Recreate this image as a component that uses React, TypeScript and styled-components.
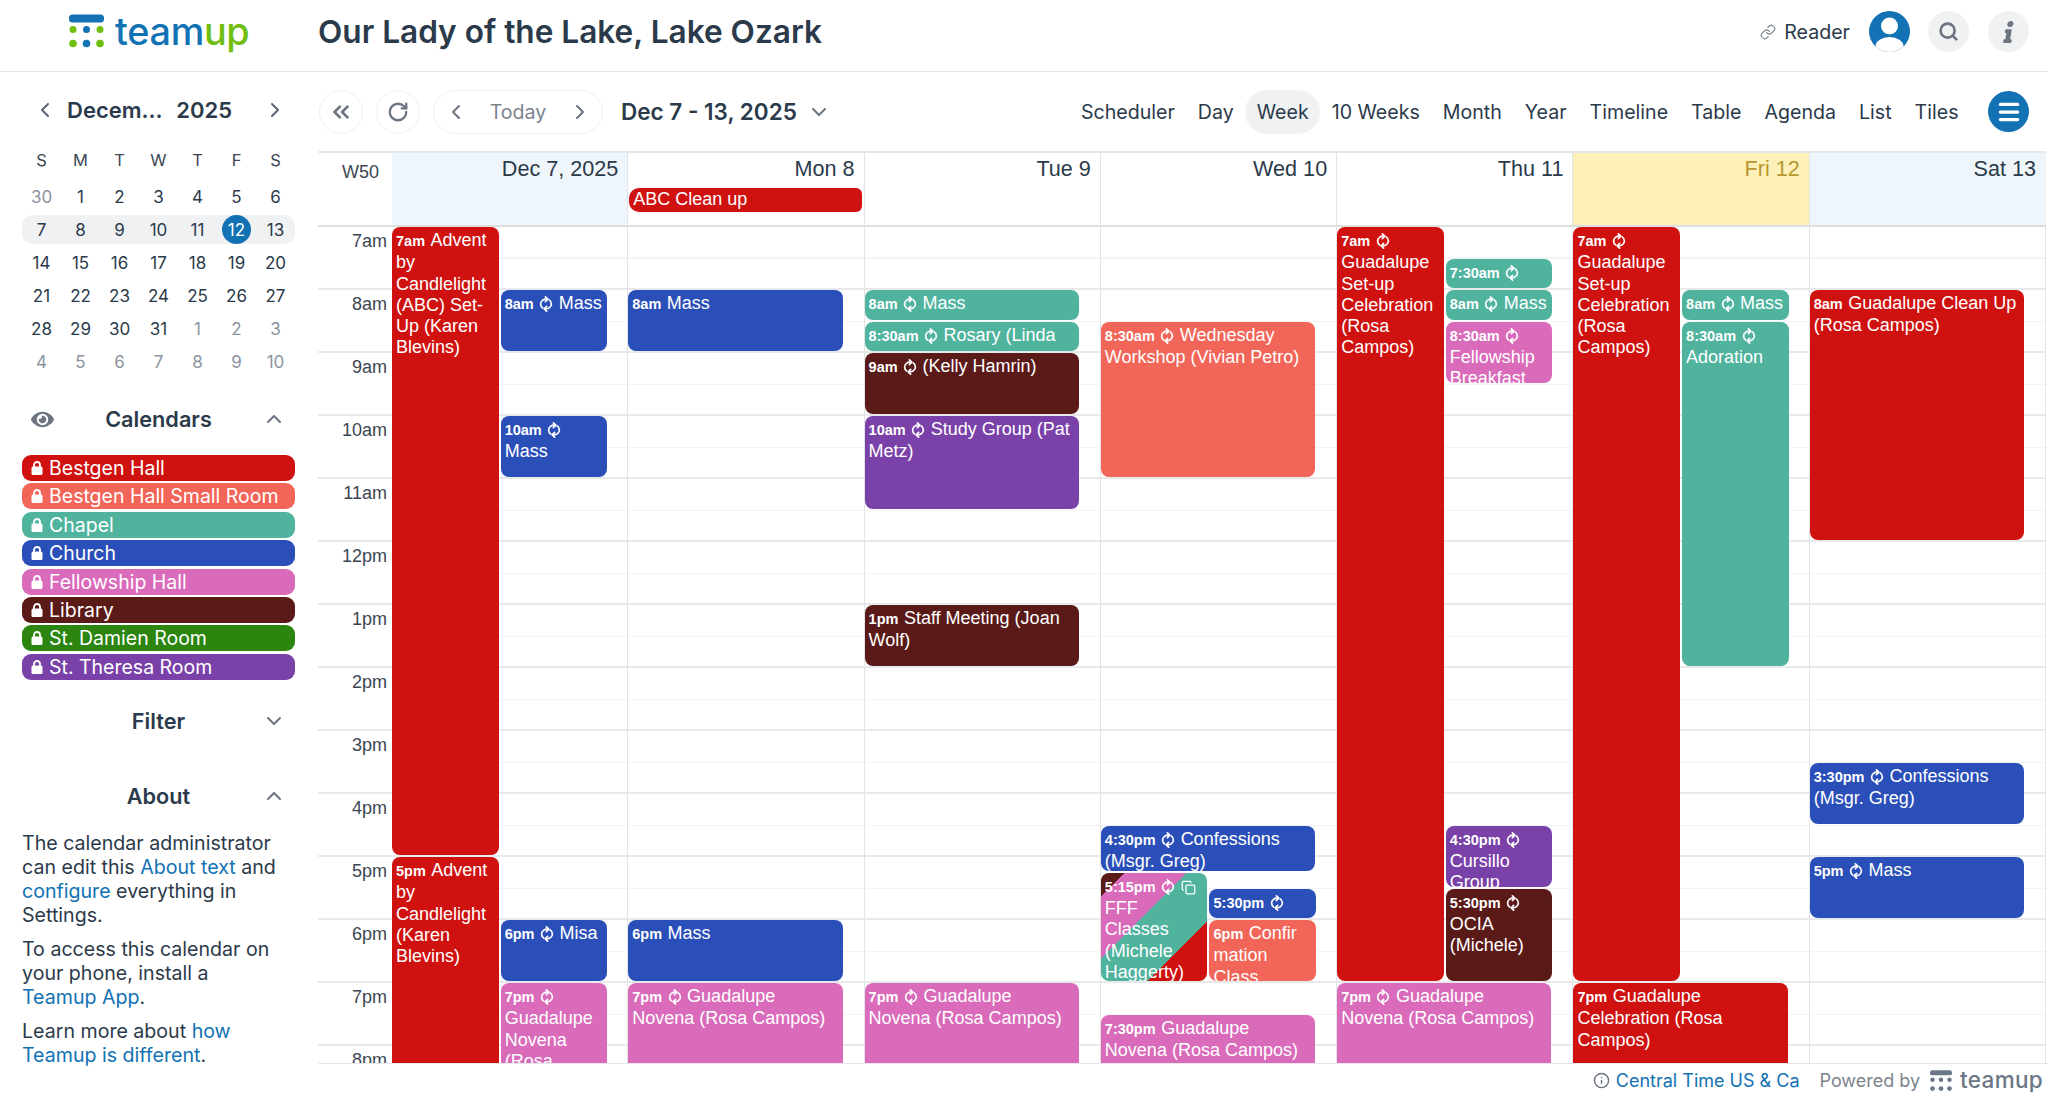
import React, { FC } from "react";
import styled, { createGlobalStyle } from "styled-components";
import { ChevronDown, ChevronLeft, ChevronRight, ChevronUp, ChevronsLeft, Copy, Info, Link, Menu, RotateCw, Search } from "lucide-react";
import { FaEye, FaInfo } from "react-icons/fa";

const HOUR = 63;
const FIRST_HOUR = 7;

const RED = "#cf1210";
const SALMON = "#f2665a";
const TEAL = "#4fb39e";
const BLUE = "#2b4fb8";
const PINK = "#d96bba";
const BROWN = "#5a1a18";
const GREEN = "#2b850e";
const PURPLE = "#7a42a8";
const FFF_BG = `linear-gradient(135deg, ${BROWN} 0 11%, ${PINK} 11% 40%, ${TEAL} 40% 72%, ${RED} 72%)`;

const GlobalStyle = createGlobalStyle`
  html, body { margin: 0; padding: 0; background: #fff; }
  body { font-family: Inter, "Liberation Sans", sans-serif; color: #2b3a4a; }
  * { box-sizing: border-box; }
`;

const Page = styled.div`
  width: 2048px;
  height: 1097px;
  overflow: hidden;
  display: flex;
  flex-direction: column;
`;

const Header = styled.header`
  height: 72px;
  flex: none;
  display: flex;
  align-items: center;
  padding: 0 19px 8px 69px;
  border-bottom: 1px solid #e5e7eb;
`;

const LogoWrap = styled.div`
  width: 249px;
  display: flex;
  align-items: center;
  gap: 11px;
`;

const LogoWord = styled.span<{ $small?: boolean }>`
  font-size: ${(p) => (p.$small ? "22.5px" : "37.8px")};
  font-weight: 500;
  letter-spacing: ${(p) => (p.$small ? "0.3px" : "-0.3px")};
  line-height: 1;
  color: ${(p) => (p.$small ? "#6b7785" : "#1272b4")};
  b { font-weight: 500; color: ${(p) => (p.$small ? "#6b7785" : "#6fbe10")}; }
`;

const Title = styled.h1`
  margin: 0;
  font-size: 31.6px;
  font-weight: 600;
  color: #2b3a4a;
`;

const HeaderRight = styled.div`
  margin-left: auto;
  display: flex;
  align-items: center;
  font-size: 19.6px;
  color: #2b3a4a;
  svg.link { color: #8a929c; margin-right: 8px; }
`;

const RoundIcon = styled.div<{ $blue?: boolean }>`
  width: 41px;
  height: 41px;
  border-radius: 50%;
  display: flex;
  align-items: center;
  justify-content: center;
  overflow: hidden;
  color: ${(p) => (p.$blue ? "#fff" : "#6b7480")};
  background: ${(p) => (p.$blue ? "#1272b4" : "#f0f1f3")};
`;

const UserIcon = styled(RoundIcon)`
  margin: 0 18px 0 19px;
`;

const SearchIcon = styled(RoundIcon)`
  margin-right: 19px;
`;

const InfoGlyph = styled(FaInfo)`
  transform: skewX(-10deg);
`;

const Body = styled.div`
  flex: 1;
  display: flex;
  min-height: 0;
`;

const Sidebar = styled.aside`
  width: 318px;
  flex: none;
  padding: 19px 23px 0 22px;
  overflow: hidden;
`;

const MiniHead = styled.div`
  height: 38px;
  display: flex;
  align-items: center;
  padding: 0 8px 0 11px;
  font-size: 22px;
  font-weight: 600;
  svg { color: #5b6672; }
`;

const MiniTitle = styled.div`
  flex: 1;
  display: flex;
  justify-content: space-between;
  padding: 0 31px 0 10px;
`;

const MiniGrid = styled.div`
  margin-top: 13px;
  display: grid;
  grid-template-columns: repeat(7, 39px);
`;

const WeekDay = styled.div`
  height: 38px;
  display: flex;
  align-items: flex-start;
  justify-content: center;
  padding-top: 8px;
  font-size: 16.5px;
  color: #3b4653;
`;

const DayCell = styled.div<{ $muted?: boolean; $week?: boolean; $first?: boolean; $last?: boolean }>`
  height: 29px;
  margin: 2px 0;
  display: flex;
  align-items: center;
  justify-content: center;
  font-size: 17px;
  color: ${(p) => (p.$muted ? "#8b949e" : "#2b3a4a")};
  background: ${(p) => (p.$week ? "#eff1f3" : "transparent")};
  border-radius: ${(p) => (p.$first ? "10px 0 0 10px" : p.$last ? "0 10px 10px 0" : "0")};
`;

const TodayDot = styled.span`
  width: 29px;
  height: 29px;
  border-radius: 50%;
  background: #1272b4;
  color: #fff;
  display: flex;
  align-items: center;
  justify-content: center;
`;

const SectionHead = styled.div<{ $gap: number }>`
  height: 40px;
  margin-top: ${(p) => p.$gap}px;
  display: grid;
  grid-template-columns: 40px 1fr 40px;
  align-items: center;
  text-align: center;
  font-size: 21.7px;
  font-weight: 600;
  color: #2b3a4a;
  svg { color: #6b7480; }
`;

const EyeSlot = styled.div`
  padding-left: 9px;
  display: flex;
  color: #6b7480;
`;

const ChevronSlot = styled.div`
  display: flex;
  justify-content: flex-end;
  padding-right: 9px;
`;

const CalendarList = styled.div`
  margin-top: 16px;
  display: flex;
  flex-direction: column;
  gap: 2.4px;
`;

const CalendarPill = styled.div<{ $color: string }>`
  height: 26px;
  border-radius: 9px;
  background: ${(p) => p.$color};
  color: #fff;
  display: flex;
  align-items: center;
  gap: 6px;
  padding-left: 9px;
  font-size: 19.5px;
  white-space: nowrap;
`;

const AboutText = styled.div`
  margin-top: 15px;
  padding-right: 10px;
  font-size: 19.6px;
  line-height: 24px;
  color: #2b3a4a;
  p { margin: 0 0 10px; }
  a { color: #1272b4; text-decoration: none; }
`;

const Main = styled.main`
  flex: 1;
  min-width: 0;
  display: flex;
  flex-direction: column;
`;

const Toolbar = styled.div`
  height: 79px;
  flex: none;
  display: flex;
  align-items: center;
  padding: 0 19px 0 1px;
`;

const CircleButton = styled.div`
  width: 44px;
  height: 44px;
  margin-right: 13px;
  border: 1.5px solid #eef0f2;
  border-radius: 50%;
  display: flex;
  align-items: center;
  justify-content: center;
  color: #6b7480;
`;

const TodayPill = styled.div`
  width: 170px;
  height: 44px;
  border: 1.5px solid #eef0f2;
  border-radius: 22px;
  display: flex;
  align-items: center;
  justify-content: space-between;
  padding: 0 10px;
  font-size: 19.6px;
  color: #7b838d;
  svg { color: #6b7480; }
`;

const DateRange = styled.div`
  margin-left: 18px;
  display: flex;
  align-items: center;
  gap: 10px;
  font-size: 22.5px;
  font-weight: 600;
  color: #2b3a4a;
  svg { color: #6b7480; }
`;

const Tabs = styled.div`
  margin-left: auto;
  display: flex;
  align-items: center;
`;

const Tab = styled.div<{ $active?: boolean }>`
  height: 44px;
  padding: 0 11.5px;
  display: flex;
  align-items: center;
  font-size: 19.6px;
  color: #2b3a4a;
  border-radius: 22px;
  background: ${(p) => (p.$active ? "#eff1f3" : "transparent")};
`;

const MenuButton = styled(RoundIcon)`
  margin-left: 18px;
`;

const Calendar = styled.div`
  flex: 1;
  min-height: 0;
  margin-right: 2px;
  display: flex;
  flex-direction: column;
  overflow: hidden;
  border-top: 2px solid #e5e7eb;
  font-family: "Liberation Sans", Arial, sans-serif;
`;

const DayGrid = styled.div`
  display: grid;
  grid-template-columns: 74px repeat(7, 1fr);
`;

const HeadRow = styled(DayGrid)`
  height: 74px;
  flex: none;
  border-bottom: 2px solid #dedfe1;
`;

const WeekNumber = styled.div`
  padding: 9px 0 0 24px;
  font-size: 18px;
  color: #3b4653;
`;

const HeadCell = styled.div<{ $kind?: "weekend" | "today" }>`
  position: relative;
  padding: 3px 9px 0 2px;
  text-align: right;
  font-size: 21.6px;
  color: ${(p) => (p.$kind === "today" ? "#b8982e" : "#2b3a4a")};
  background: ${(p) => (p.$kind === "weekend" ? "#eff6fb" : p.$kind === "today" ? "#fdf1b9" : "#fff")};
  border-right: 1.5px solid #e3e4e6;
  &:last-child { border-right: 1.5px solid #eff6fb; }
`;

const AllDayEvent = styled.div<{ $color: string }>`
  height: 24px;
  margin: 6px -7px 0 -1px;
  padding-left: 4px;
  border-radius: 10px 6px 6px 10px;
  background: ${(p) => p.$color};
  color: #fff;
  font-size: 18px;
  line-height: 23px;
  text-align: left;
`;

const TimeBody = styled(DayGrid)`
  flex: 1;
  min-height: 0;
  overflow: hidden;
`;

const Gutter = styled.div`
  background: repeating-linear-gradient(to bottom, #fff 0 ${HOUR - 2}px, #e8e9eb ${HOUR - 2}px ${HOUR}px);
`;

const HourLabel = styled.div`
  height: ${HOUR}px;
  padding: 2px 5px 0 0;
  text-align: right;
  font-size: 18px;
  line-height: 24px;
  color: #3b4653;
`;

const DayColumn = styled.div`
  position: relative;
  border-right: 1.5px solid #e3e4e6;
  background: repeating-linear-gradient(
    to bottom,
    #fff 0 ${HOUR / 2 - 1}px,
    #f3f4f5 ${HOUR / 2 - 1}px ${HOUR / 2}px,
    #fff ${HOUR / 2}px ${HOUR - 2}px,
    #e8e9eb ${HOUR - 2}px ${HOUR}px
  );
`;

const EventBox = styled.div<{ $bg: string; $short: boolean }>`
  position: absolute;
  overflow: hidden;
  padding: 3px 3px 0 4px;
  border-radius: 8px;
  background: ${(p) => p.$bg};
  color: #fff;
  font-size: 18px;
  line-height: 21.3px;
  white-space: ${(p) => (p.$short ? "nowrap" : "normal")};
  b { font-size: 14.5px; font-weight: 700; margin-right: 5.5px; }
  svg { vertical-align: -3px; margin-right: 5.5px; }
`;

const Footer = styled.footer`
  height: 34px;
  flex: none;
  border-top: 1px solid #e5e7eb;
  display: flex;
  align-items: center;
  justify-content: flex-end;
  padding: 0 5px 0 0;
  font-size: 18px;
  color: #7b838d;
`;

const ZoneLink = styled.span`
  display: flex;
  align-items: center;
  gap: 6px;
  margin-right: 20px;
  color: #1272b4;
  svg { color: #6b7480; }
`;

const PoweredLogo = styled.span`
  display: flex;
  align-items: center;
  gap: 8px;
  margin-left: 10px;
`;

const RepeatIcon: FC = () => (
  <svg width="14" height="16" viewBox="0 0 14 16" fill="none" stroke="currentColor" strokeWidth="1.7" strokeLinecap="round" strokeLinejoin="round">
    <path d="M8 3.2C4.5 2.8 1.6 5 1.6 8c0 1.8.9 3.2 2.2 4.1" />
    <path d="M6.4.9 8.8 3.2 6.4 5.6" />
    <path d="M6 12.8c3.5.4 6.4-1.8 6.4-4.8 0-1.8-.9-3.2-2.2-4.1" />
    <path d="M7.6 15.1 5.2 12.8 7.6 10.4" />
  </svg>
);

const LockIcon: FC = () => (
  <svg width="12" height="14" viewBox="0 0 12 14" fill="#fff">
    <path d="M3 6V4a3 3 0 0 1 6 0v2" fill="none" stroke="#fff" strokeWidth="1.8" />
    <rect x="0.5" y="5.5" width="11" height="8.5" rx="1.5" />
  </svg>
);

const LogoMark: FC<{ $mono?: boolean; size: number }> = ({ $mono, size }) => {
  const blue = $mono ? "#6b7785" : "#1272b4";
  const green = $mono ? "#6b7785" : "#6fbe10";
  return (
    <svg width={size} height={size} viewBox="0 0 35 34">
      <rect x="0" y="0" width="35" height="8" rx="3.5" fill={blue} />
      <circle cx="4" cy="15" r="3.5" fill={green} />
      <circle cx="17.5" cy="15" r="3.5" fill={blue} />
      <circle cx="31" cy="15" r="3.5" fill={green} />
      <circle cx="4" cy="29" r="3.8" fill={green} />
      <circle cx="17.5" cy="29" r="3.8" fill={blue} />
      <circle cx="31" cy="29" r="3.8" fill={green} />
    </svg>
  );
};

const UserGlyph: FC = () => (
  <svg width="41" height="41" viewBox="0 0 41 41" fill="#fff">
    <circle cx="20.5" cy="15" r="8.5" />
    <ellipse cx="20.5" cy="35" rx="14" ry="9" />
  </svg>
);

type Lane = "full" | "left" | "right" | "wide";

interface CalEvent {
  start: number;
  end: number;
  time: string;
  title?: string;
  color: string;
  lane: Lane;
  repeat?: boolean;
  multi?: boolean;
}

const laneBox = (lane: Lane) => {
  // columns keep a 20px free strip on the right, side by side events share the rest
  if (lane === "left") return { left: "0px", width: "calc((100% - 22px) / 2)" };
  if (lane === "right") return { left: "calc((100% - 22px) / 2 + 2px)", width: "calc((100% - 22px) / 2)" };
  return { left: "0px", width: "calc(100% - 21px)" };
};

const week: CalEvent[][] = [
  [
    { start: 7, end: 17, time: "7am", title: "Advent by Candlelight (ABC) Set-Up (Karen Blevins)", color: RED, lane: "left" },
    { start: 17, end: 24, time: "5pm", title: "Advent by Candlelight (Karen Blevins)", color: RED, lane: "left" },
    { start: 8, end: 9, time: "8am", title: "Mass", color: BLUE, lane: "right", repeat: true },
    { start: 10, end: 11, time: "10am", title: "Mass", color: BLUE, lane: "right", repeat: true },
    { start: 18, end: 19, time: "6pm", title: "Misa", color: BLUE, lane: "right", repeat: true },
    { start: 19, end: 21, time: "7pm", title: "Guadalupe Novena (Rosa Campos)", color: PINK, lane: "right", repeat: true },
  ],
  [
    { start: 8, end: 9, time: "8am", title: "Mass", color: BLUE, lane: "full" },
    { start: 18, end: 19, time: "6pm", title: "Mass", color: BLUE, lane: "full" },
    { start: 19, end: 21, time: "7pm", title: "Guadalupe Novena (Rosa Campos)", color: PINK, lane: "full", repeat: true },
  ],
  [
    { start: 8, end: 8.5, time: "8am", title: "Mass", color: TEAL, lane: "full", repeat: true },
    { start: 8.5, end: 9, time: "8:30am", title: "Rosary (Linda", color: TEAL, lane: "full", repeat: true },
    { start: 9, end: 10, time: "9am", title: "(Kelly Hamrin)", color: BROWN, lane: "full", repeat: true },
    { start: 10, end: 11.5, time: "10am", title: "Study Group (Pat Metz)", color: PURPLE, lane: "full", repeat: true },
    { start: 13, end: 14, time: "1pm", title: "Staff Meeting (Joan Wolf)", color: BROWN, lane: "full" },
    { start: 19, end: 21, time: "7pm", title: "Guadalupe Novena (Rosa Campos)", color: PINK, lane: "full", repeat: true },
  ],
  [
    { start: 8.5, end: 11, time: "8:30am", title: "Wednesday Workshop (Vivian Petro)", color: SALMON, lane: "full", repeat: true },
    { start: 16.5, end: 17.25, time: "4:30pm", title: "Confessions (Msgr. Greg)", color: BLUE, lane: "full", repeat: true },
    { start: 17.25, end: 19, time: "5:15pm", title: "FFF Classes (Michele Haggerty)", color: FFF_BG, lane: "left", repeat: true, multi: true },
    { start: 17.5, end: 18, time: "5:30pm", color: BLUE, lane: "right", repeat: true },
    { start: 18, end: 19, time: "6pm", title: "Confir\u200bmation Class", color: SALMON, lane: "right" },
    { start: 19.5, end: 21, time: "7:30pm", title: "Guadalupe Novena (Rosa Campos)", color: PINK, lane: "full" },
  ],
  [
    { start: 7, end: 19, time: "7am", title: "Guadalupe Set-up Celebration (Rosa Campos)", color: RED, lane: "left", repeat: true },
    { start: 7.5, end: 8, time: "7:30am", color: TEAL, lane: "right", repeat: true },
    { start: 8, end: 8.5, time: "8am", title: "Mass", color: TEAL, lane: "right", repeat: true },
    { start: 8.5, end: 9.5, time: "8:30am", title: "Fellowship Breakfast", color: PINK, lane: "right", repeat: true },
    { start: 16.5, end: 17.5, time: "4:30pm", title: "Cursillo Group", color: PURPLE, lane: "right", repeat: true },
    { start: 17.5, end: 19, time: "5:30pm", title: "OCIA (Michele)", color: BROWN, lane: "right", repeat: true },
    { start: 19, end: 21, time: "7pm", title: "Guadalupe Novena (Rosa Campos)", color: PINK, lane: "wide", repeat: true },
  ],
  [
    { start: 7, end: 19, time: "7am", title: "Guadalupe Set-up Celebration (Rosa Campos)", color: RED, lane: "left", repeat: true },
    { start: 8, end: 8.5, time: "8am", title: "Mass", color: TEAL, lane: "right", repeat: true },
    { start: 8.5, end: 14, time: "8:30am", title: "Adoration", color: TEAL, lane: "right", repeat: true },
    { start: 19, end: 21, time: "7pm", title: "Guadalupe Celebration (Rosa Campos)", color: RED, lane: "wide" },
  ],
  [
    { start: 8, end: 12, time: "8am", title: "Guadalupe Clean Up (Rosa Campos)", color: RED, lane: "full" },
    { start: 15.5, end: 16.5, time: "3:30pm", title: "Confessions (Msgr. Greg)", color: BLUE, lane: "full", repeat: true },
    { start: 17, end: 18, time: "5pm", title: "Mass", color: BLUE, lane: "full", repeat: true },
  ],
];

const hourLabels = ["7am", "8am", "9am", "10am", "11am", "12pm", "1pm", "2pm", "3pm", "4pm", "5pm", "6pm", "7pm", "8pm"];

const dayHeads: { label: string; kind?: "weekend" | "today" }[] = [
  { label: "Dec 7, 2025", kind: "weekend" },
  { label: "Mon 8" },
  { label: "Tue 9" },
  { label: "Wed 10" },
  { label: "Thu 11" },
  { label: "Fri 12", kind: "today" },
  { label: "Sat 13", kind: "weekend" },
];

const calendars = [
  { name: "Bestgen Hall", color: RED },
  { name: "Bestgen Hall Small Room", color: SALMON },
  { name: "Chapel", color: TEAL },
  { name: "Church", color: BLUE },
  { name: "Fellowship Hall", color: PINK },
  { name: "Library", color: BROWN },
  { name: "St. Damien Room", color: GREEN },
  { name: "St. Theresa Room", color: PURPLE },
];

const miniDays = [
  30, 1, 2, 3, 4, 5, 6,
  7, 8, 9, 10, 11, 12, 13,
  14, 15, 16, 17, 18, 19, 20,
  21, 22, 23, 24, 25, 26, 27,
  28, 29, 30, 31, 1, 2, 3,
  4, 5, 6, 7, 8, 9, 10,
];

const viewTabs = ["Scheduler", "Day", "Week", "10 Weeks", "Month", "Year", "Timeline", "Table", "Agenda", "List", "Tiles"];

const EventItem: FC<{ event: CalEvent }> = ({ event }) => {
  const top = (event.start - FIRST_HOUR) * HOUR;
  const height = (event.end - event.start) * HOUR - 2;
  return (
    <EventBox $bg={event.color} $short={event.end - event.start <= 0.5} style={{ top, height, ...laneBox(event.lane) }}>
      <b>{event.time}</b>
      {event.repeat && <RepeatIcon />}
      {event.multi && <Copy size={15} />}
      {event.title}
    </EventBox>
  );
};

const App: FC = () => {
  return (
    <Page>
      <GlobalStyle />
      <Header>
        <LogoWrap>
          <LogoMark size={35} />
          <LogoWord>team<b>up</b></LogoWord>
        </LogoWrap>
        <Title>Our Lady of the Lake, Lake Ozark</Title>
        <HeaderRight>
          <Link className="link" size={16} />
          Reader
          <UserIcon $blue><UserGlyph /></UserIcon>
          <SearchIcon><Search size={21} strokeWidth={3} /></SearchIcon>
          <RoundIcon><InfoGlyph size={22} /></RoundIcon>
        </HeaderRight>
      </Header>
      <Body>
        <Sidebar>
          <MiniHead>
            <ChevronLeft size={24} />
            <MiniTitle><span>Decem...</span><span>2025</span></MiniTitle>
            <ChevronRight size={24} />
          </MiniHead>
          <MiniGrid>
            {["S", "M", "T", "W", "T", "F", "S"].map((d, i) => <WeekDay key={i}>{d}</WeekDay>)}
            {miniDays.map((d, i) => (
              <DayCell
                key={i}
                $muted={i === 0 || i >= 32}
                $week={i >= 7 && i < 14}
                $first={i === 7}
                $last={i === 13}
              >
                {i === 12 ? <TodayDot>{d}</TodayDot> : d}
              </DayCell>
            ))}
          </MiniGrid>
          <SectionHead $gap={21}>
            <EyeSlot><FaEye size={23} /></EyeSlot>
            <span>Calendars</span>
            <ChevronSlot><ChevronUp size={24} /></ChevronSlot>
          </SectionHead>
          <CalendarList>
            {calendars.map((c) => (
              <CalendarPill key={c.name} $color={c.color}><LockIcon />{c.name}</CalendarPill>
            ))}
          </CalendarList>
          <SectionHead $gap={21}>
            <span />
            <span>Filter</span>
            <ChevronSlot><ChevronDown size={24} /></ChevronSlot>
          </SectionHead>
          <SectionHead $gap={35}>
            <span />
            <span>About</span>
            <ChevronSlot><ChevronUp size={24} /></ChevronSlot>
          </SectionHead>
          <AboutText>
            <p>The calendar administrator can edit this <a>About text</a> and <a>configure</a> everything in Settings.</p>
            <p>To access this calendar on your phone, install a <a>Teamup App</a>.</p>
            <p>Learn more about <a>how Teamup is different</a>.</p>
          </AboutText>
        </Sidebar>
        <Main>
          <Toolbar>
            <CircleButton><ChevronsLeft size={26} strokeWidth={2.5} /></CircleButton>
            <CircleButton><RotateCw size={22} strokeWidth={2.5} /></CircleButton>
            <TodayPill>
              <ChevronLeft size={24} />
              Today
              <ChevronRight size={24} />
            </TodayPill>
            <DateRange>Dec 7 - 13, 2025 <ChevronDown size={24} /></DateRange>
            <Tabs>
              {viewTabs.map((t) => <Tab key={t} $active={t === "Week"}>{t}</Tab>)}
              <MenuButton $blue><Menu size={26} strokeWidth={3} /></MenuButton>
            </Tabs>
          </Toolbar>
          <Calendar>
            <HeadRow>
              <WeekNumber>W50</WeekNumber>
              {dayHeads.map((d) => (
                <HeadCell key={d.label} $kind={d.kind}>
                  {d.label}
                  {d.label === "Mon 8" && <AllDayEvent $color={RED}>ABC Clean up</AllDayEvent>}
                </HeadCell>
              ))}
            </HeadRow>
            <TimeBody>
              <Gutter>
                {hourLabels.map((h) => <HourLabel key={h}>{h}</HourLabel>)}
              </Gutter>
              {week.map((events, i) => (
                <DayColumn key={i}>
                  {events.map((e) => <EventItem key={e.time + e.color + e.lane} event={e} />)}
                </DayColumn>
              ))}
            </TimeBody>
          </Calendar>
          <Footer>
            <ZoneLink><Info size={17} />Central Time US &amp; Ca</ZoneLink>
            Powered by
            <PoweredLogo>
              <LogoMark $mono size={22} />
              <LogoWord $small>teamup</LogoWord>
            </PoweredLogo>
          </Footer>
        </Main>
      </Body>
    </Page>
  );
};

export default App;
